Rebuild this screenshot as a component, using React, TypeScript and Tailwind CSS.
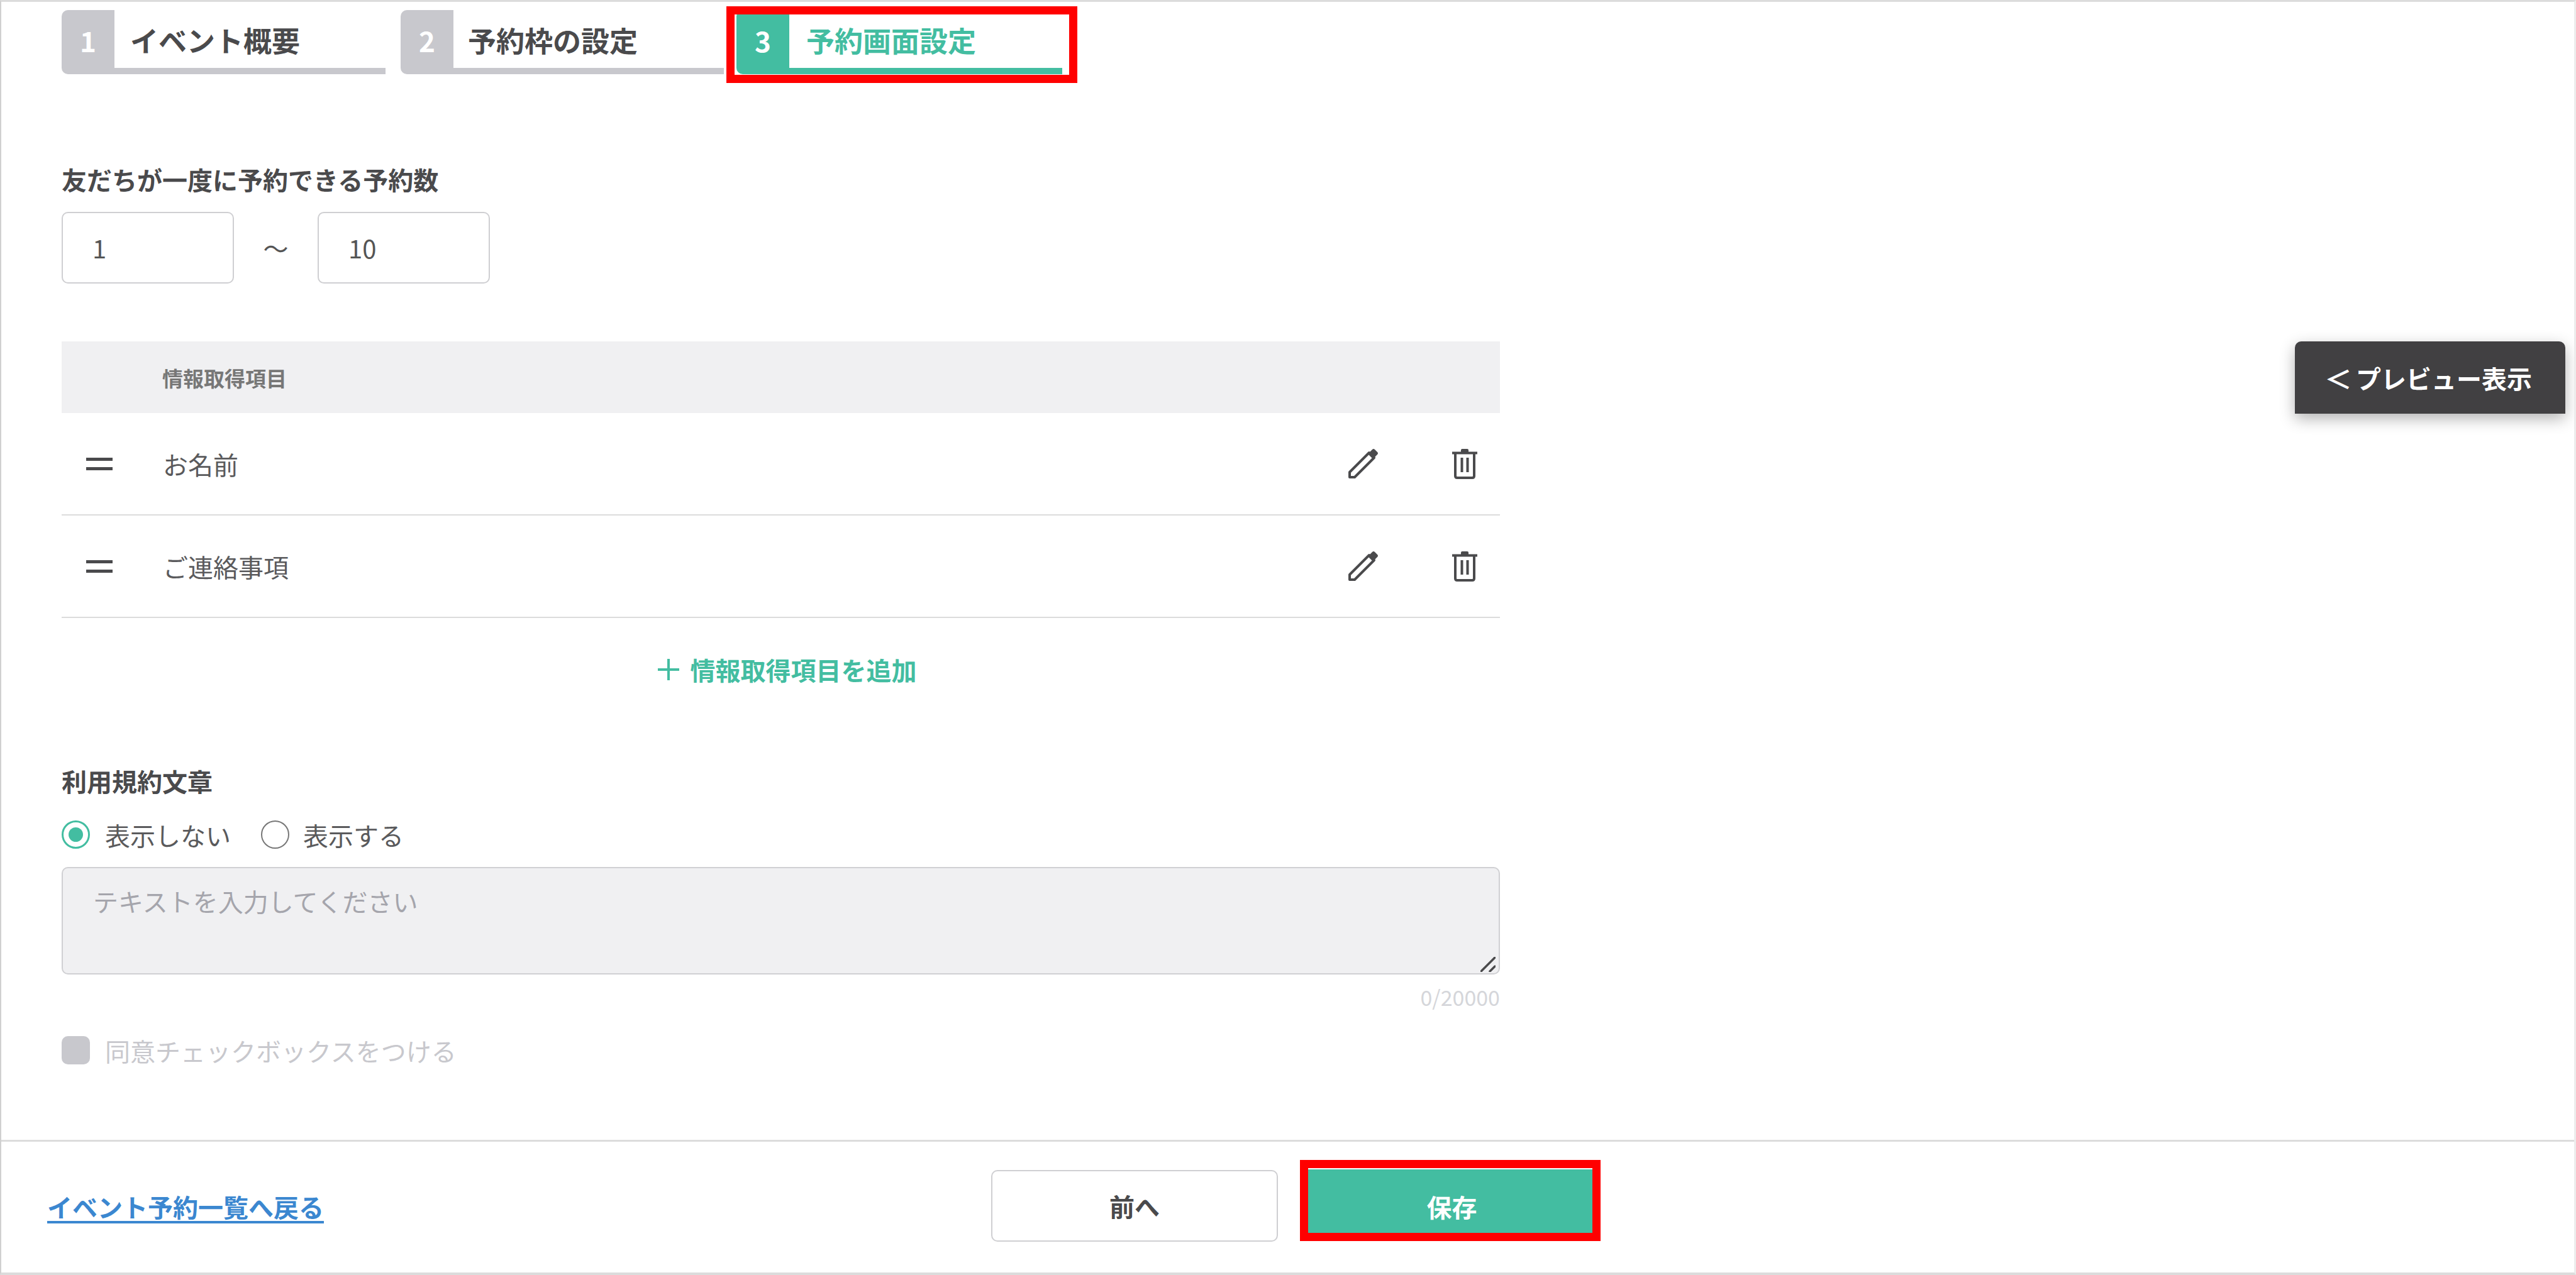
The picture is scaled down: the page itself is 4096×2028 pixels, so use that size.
const font = '[font-family:"Noto_Sans_CJK_JP","Noto_Sans",sans-serif]'

const steps = [
  { no: 1, label: 'イベント概要', width: 'w-[515px]', pad: 'pl-[25px]', active: false },
  { no: 2, label: '予約枠の設定', width: 'ml-[24px] w-[514px]', pad: 'pl-[23px]', active: false },
  { no: 3, label: '予約画面設定', width: 'ml-[20px] w-[518px]', pad: 'pl-[27px]', active: true },
]

const PencilIcon = () => (
  <svg width="49" height="49" viewBox="0 0 49 49" className="shrink-0">
    <path d="M3 46V38L34 7l8 8L11 46Z" fill="none" stroke="#4a4a4c" strokeWidth="4" strokeLinejoin="round" />
    <path d="M32 9l7-7q2-2 4 0l4 4q2 2 0 4l-7 7Z" fill="#4a4a4c" />
  </svg>
)

const TrashIcon = () => (
  <svg width="40" height="48" viewBox="0 0 40 48" className="shrink-0">
    <path d="M14 5V2q0-2 2-2h8q2 0 2 2v3Z" fill="#4a4a4c" />
    <path d="M0 6.5h40" stroke="#4a4a4c" strokeWidth="4" />
    <path d="M5 7v36q0 3 3 3h24q3 0 3-3V7" fill="none" stroke="#4a4a4c" strokeWidth="4" />
    <path d="M15.5 14v23M24.5 14v23" stroke="#4a4a4c" strokeWidth="4" />
  </svg>
)

const Row = ({ label }: { label: string }) => (
  <div className="flex h-[163px] items-center border-b-2 border-[#dcdcdc]">
    <div className="ml-[39px] flex w-[42px] flex-col gap-[10px]">
      <div className="h-[5px] bg-[#4a4a4c]" />
      <div className="h-[5px] bg-[#4a4a4c]" />
    </div>
    <div className="ml-[80px] flex-1 text-[40px] leading-[56px] text-[#5a5a5c]">{label}</div>
    <PencilIcon />
    <div className="ml-[117px] mr-[36px]"><TrashIcon /></div>
  </div>
)

export default function App() {
  return (
    <div className={`relative box-border flex h-[2028px] w-[4096px] flex-col overflow-hidden border-t-[3px] border-r-[3px] border-b-[4px] border-l-2 border-t-[#dcdcdc] border-r-[#ececec] border-b-[#dcdcdc] border-l-[#d0d0d0] bg-white ${font}`}>
      <div className="flex-1 pl-[96px]">
        <div className="mt-[13px] flex h-[102px]">
          {steps.map(s => (
            <div key={s.no} className={`${s.width} flex h-full shrink-0`}>
              <div className={`flex w-[84px] shrink-0 items-center justify-center rounded-[10px] rounded-tr-none rounded-br-none pb-[6px] text-[44px] font-bold leading-none text-white ${s.active ? 'bg-[#43bda1]' : 'bg-[#c8c8cd]'}`}>
                {s.no}
              </div>
              <div className={`flex flex-1 items-center border-b-[10px] ${s.pad} pt-[2px] text-[45px] font-bold leading-none ${s.active ? 'border-[#43bda1] text-[#43bda1]' : 'border-[#c8c8cd] text-[#4a4a4c]'}`}>
                {s.label}
              </div>
            </div>
          ))}
        </div>

        <div className="mt-[139px] text-[40px] font-bold leading-[56px] text-[#4a4a4c]">友だちが一度に予約できる予約数</div>
        <div className="mt-[24px] flex h-[114px] items-center">
          <input defaultValue="1" className="box-border h-full w-[274px] rounded-[10px] border-2 border-[#cfcfd2] pl-[47px] text-[40px] text-[#555] outline-none" />
          <span className="w-[133px] text-center text-[40px] text-[#555]">～</span>
          <input defaultValue="10" className="box-border h-full w-[274px] rounded-[10px] border-2 border-[#cfcfd2] pl-[47px] text-[40px] text-[#555] outline-none" />
        </div>

        <div className="mt-[92px] w-[2287px]">
          <div className="flex h-[114px] items-center bg-[#f0f0f2] pl-[160px] pt-[3px] text-[33px] font-bold text-[#777]">情報取得項目</div>
          <Row label="お名前" />
          <Row label="ご連絡事項" />
          <div className="flex h-[166px] items-center justify-center pl-[20px] pb-[2px] text-[40px] font-bold leading-none text-[#43bda1]">
            <svg width="34" height="34" viewBox="0 0 34 34" className="mr-[18px]">
              <path d="M17 0v34M0 17h34" stroke="#43bda1" strokeWidth="4" />
            </svg>
            情報取得項目を追加
          </div>

          <div className="mt-[65px] text-[40px] font-bold leading-[56px] text-[#4a4a4c]">利用規約文章</div>
          <div className="mt-[35px] flex h-[45px] items-center text-[40px] leading-none text-[#5a5a5c]">
            <div className="flex h-[45px] w-[45px] items-center justify-center rounded-full border-[3px] border-[#43bda1]">
              <div className="h-[23px] w-[23px] rounded-full bg-[#43bda1]" />
            </div>
            <span className="ml-[24px]">表示しない</span>
            <div className="ml-[48px] h-[45px] w-[45px] rounded-full border-2 border-[#777]" />
            <span className="ml-[22px]">表示する</span>
          </div>
          <div className="relative mt-[29px] h-[171px]">
            <textarea
              readOnly
              placeholder="テキストを入力してください"
              className="box-border block h-full w-full resize-none rounded-[10px] border-2 border-[#d0d0d3] bg-[#f0f0f2] px-[48px] py-[24px] text-[40px] leading-[56px] outline-none placeholder:text-[#a5a5ac]"
            />
            <svg width="24" height="24" viewBox="0 0 24 24" className="absolute right-[7px] bottom-[4px]">
              <path d="M1 23L23 1M15 23l8-8" stroke="#4a4a4c" strokeWidth="3.5" strokeLinecap="round" />
            </svg>
          </div>
          <div className="mt-[16px] text-right text-[34px] leading-[40px] text-[#d5d6da]">0/20000</div>
          <div className="mt-[42px] flex h-[45px] items-center text-[40px] leading-none text-[#c8c8cd]">
            <div className="h-[45px] w-[45px] rounded-[10px] bg-[#c8c8cd]" />
            <span className="ml-[24px]">同意チェックボックスをつける</span>
          </div>
        </div>
      </div>

      <div className="flex h-[211px] border-t-[3px] border-[#dcdcdc] pl-[73px]">
        <a href="#" className="mt-[75px] w-[1501px] text-[40px] font-bold leading-[56px] text-[#3b87d0] underline underline-offset-[6px]">
          イベント予約一覧へ戻る
        </a>
        <button className="mt-[45px] box-border h-[114px] w-[456px] rounded-[10px] border-2 border-[#cfcfd2] bg-white text-[40px] font-bold text-[#4a4a4c]">前へ</button>
        <button className="mt-[44px] ml-[48px] h-[114px] w-[457px] bg-[#43bda1] pt-[3px] text-[40px] font-bold text-white">保存</button>
      </div>

      {/* preview tab floats over the page */}
      <div className="absolute top-[540px] right-[14px] flex h-[115px] w-[430px] items-center justify-center rounded-t-[10px] bg-[#414042] pr-[4px] text-[40px] font-bold text-white shadow-[0_8px_24px_rgba(0,0,0,0.3)]">
        <span className="mr-[8px] inline-block scale-x-110">＜</span>プレビュー表示
      </div>

      {/* red annotation frames */}
      <div className="absolute top-[7px] left-[1153px] h-[122px] w-[558px] border-[13px] border-[#ff0000]" />
      <div className="absolute top-[1842px] left-[2065px] h-[129px] w-[478px] border-[13px] border-[#ff0000]" />
    </div>
  )
}
